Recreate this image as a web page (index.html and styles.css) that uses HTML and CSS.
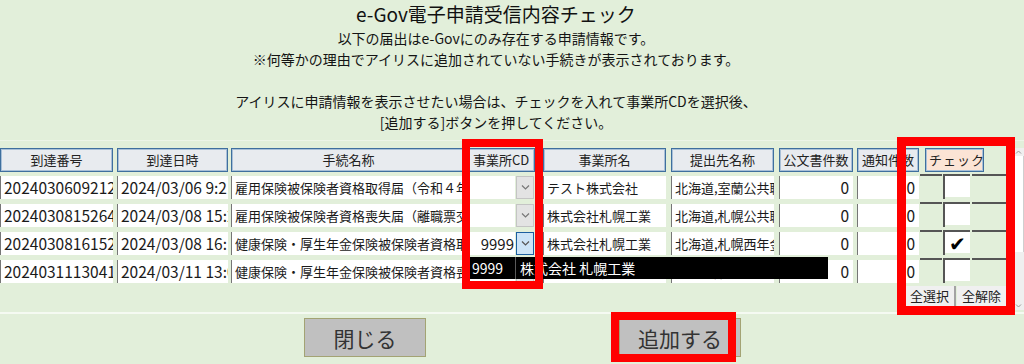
FILE: index.html
```html
<!DOCTYPE html>
<html lang="ja">
<head>
  <meta charset="UTF-8">
  <meta name="viewport" content="width=device-width, initial-scale=1.0">
  <title>e-Gov電子申請受信内容チェック</title>
  <link rel="stylesheet" href="styles.css">
</head>
<body>
  <div class="top">
    <h1>e-Gov電子申請受信内容チェック</h1>
    <p class="intro">以下の届出はe-Govにのみ存在する申請情報です。<br>※何等かの理由でアイリスに追加されていない手続きが表示されております。</p>
    <p class="intro gap">アイリスに申請情報を表示させたい場合は、チェックを入れて事業所CDを選択後、<br>[追加する]ボタンを押してください。</p>
  </div>

  <div class="table-area">
    <div class="grid">
      <!-- header -->
      <div class="row head">
        <div class="th c-no">到達番号</div>
        <div class="th c-date">到達日時</div>
        <div class="th c-proc">手続名称</div>
        <div class="th c-cd">事業所CD</div>
        <div class="th c-name">事業所名</div>
        <div class="th c-dest">提出先名称</div>
        <div class="th c-doc">公文書件数</div>
        <div class="th c-note">通知件数</div>
        <div class="th c-check">チェック</div>
      </div>

      <div class="row">
        <div class="cell num c-no">202403060921270</div>
        <div class="cell num c-date">2024/03/06 9:21</div>
        <div class="cell c-proc">雇用保険被保険者資格取得届（令和４年）</div>
        <div class="cd c-cd">
          <span class="cd-value"></span>
          <span class="cd-btn"><svg width="9" height="5" viewBox="0 0 9 5"><polyline points="1,0.5 4.5,4 8,0.5" fill="none" stroke="#777" stroke-width="1.2"/></svg></span>
        </div>
        <div class="cell c-name">テスト株式会社</div>
        <div class="cell c-dest">北海道,室蘭公共職業安定所</div>
        <div class="cell num right c-doc">0</div>
        <div class="cell num right c-note">0</div>
        <div class="chk"><span class="chk-gap"></span><span class="chk-box"><span class="tick"></span></span><span class="chk-rest"></span></div>
      </div>

      <div class="row">
        <div class="cell num c-no">202403081526430</div>
        <div class="cell num c-date">2024/03/08 15:26</div>
        <div class="cell c-proc">雇用保険被保険者資格喪失届（離職票交付）</div>
        <div class="cd c-cd">
          <span class="cd-value"></span>
          <span class="cd-btn"><svg width="9" height="5" viewBox="0 0 9 5"><polyline points="1,0.5 4.5,4 8,0.5" fill="none" stroke="#777" stroke-width="1.2"/></svg></span>
        </div>
        <div class="cell c-name">株式会社札幌工業</div>
        <div class="cell c-dest">北海道,札幌公共職業安定所</div>
        <div class="cell num right c-doc">0</div>
        <div class="cell num right c-note">0</div>
        <div class="chk"><span class="chk-gap"></span><span class="chk-box"><span class="tick"></span></span><span class="chk-rest"></span></div>
      </div>

      <div class="row">
        <div class="cell num c-no">202403081615220</div>
        <div class="cell num c-date">2024/03/08 16:15</div>
        <div class="cell c-proc">健康保険・厚生年金保険被保険者資格取得届</div>
        <div class="cd c-cd open">
          <span class="cd-value">9999</span>
          <span class="cd-btn focus"><svg width="9" height="5" viewBox="0 0 9 5"><polyline points="1,0.5 4.5,4 8,0.5" fill="none" stroke="#555" stroke-width="1.2"/></svg></span>
          <div class="dropdown">
            <span class="dd-code">9999</span>
            <span class="dd-name">株式会社 札幌工業</span>
          </div>
        </div>
        <div class="cell c-name">株式会社札幌工業</div>
        <div class="cell c-dest">北海道,札幌西年金事務所</div>
        <div class="cell num right c-doc">0</div>
        <div class="cell num right c-note">0</div>
        <div class="chk"><span class="chk-gap"></span><span class="chk-box"><span class="tick">✔</span></span><span class="chk-rest"></span></div>
      </div>

      <div class="row">
        <div class="cell num c-no">202403111304160</div>
        <div class="cell num c-date">2024/03/11 13:04</div>
        <div class="cell c-proc">健康保険・厚生年金保険被保険者資格喪失届</div>
        <div class="cd c-cd">
          <span class="cd-value"></span>
          <span class="cd-btn"></span>
        </div>
        <div class="cell c-name">株式会社札幌工業</div>
        <div class="cell c-dest">北海道,札幌西年金事務所</div>
        <div class="cell num right c-doc">0</div>
        <div class="cell num right c-note">0</div>
        <div class="chk"><span class="chk-gap"></span><span class="chk-box"><span class="tick"></span></span><span class="chk-rest"></span></div>
      </div>

      <div class="bulk">
        <button class="bulk-btn sel">全選択</button>
        <button class="bulk-btn">全解除</button>
      </div>
    </div>

    <div class="scroll">
      <svg width="11" height="8" viewBox="0 0 11 8"><polyline points="3,5.5 5.5,3 8,5.5" fill="none" stroke="#999" stroke-width="1"/></svg>
      <span class="thumb"></span>
      <svg class="down" width="11" height="8" viewBox="0 0 11 8"><polyline points="3,2.5 5.5,5 8,2.5" fill="none" stroke="#999" stroke-width="1"/></svg>
    </div>
  </div>

  <div class="actions">
    <button class="big-btn">閉じる</button>
    <button class="big-btn">追加する</button>
  </div>

  <!-- red annotation frames -->
  <div class="mark mark-cd"></div>
  <div class="mark mark-check"></div>
  <div class="mark mark-add"></div>
</body>
</html>
```

FILE: styles.css
```css
/* Page */
body {
  margin: 0;
  width: 1024px;
  height: 364px;
  overflow: hidden;
  position: relative;
  background-color: #e2efda;
  font-family: "Noto Sans CJK JP", sans-serif;
  color: #1a1a1a;
}

/* Title and notes */
.top {
  height: 140px;
  padding-right: 32px;
  text-align: center;
}

h1 {
  margin: 0;
  font-size: 19px;
  font-weight: normal;
  line-height: 28px;
  color: #111;
}

.intro {
  margin: 0;
  font-size: 14px;
  line-height: 21px;
  color: #141414;
}

.intro.gap {
  margin-top: 21px;
}

/* Table area */
.table-area {
  height: 172px;
  display: flex;
  box-sizing: border-box;
  border-top: 1px solid #edf5e8;
}

.grid {
  width: 1013px;
  padding-top: 7px;
}

.row {
  display: flex;
  height: 23px;
  margin-bottom: 5px;
}

.row.head {
  height: 24px;
  margin-bottom: 4px;
}

/* column widths */
.c-no   { width: 113px; margin-right: 4px; }
.c-date { width: 111px; margin-right: 3px; }
.c-proc { width: 235px; margin-right: 1px; }
.c-cd   { width: 68px;  margin-right: 8px; }
.c-name { width: 123px; margin-right: 5px; }
.c-dest { width: 103px; margin-right: 5px; }
.c-doc  { width: 74px;  margin-right: 4px; }
.c-note { width: 62px; }
.c-check { width: 59px; margin-left: 6px; }

.th {
  box-sizing: border-box;
  background-color: #e8ebef;
  border: 1px solid #3f6f9e;
  box-shadow: inset 0 0 0 1px #a9c0d8;
  font-size: 13px;
  line-height: 22px;
  text-align: center;
  color: #222;
  white-space: nowrap;
  overflow: hidden;
}

.th.c-check {
  background-color: #fbe4d5;
  text-align: left;
  padding-left: 3px;
  letter-spacing: 1px;
}

.cell {
  box-sizing: border-box;
  background-color: #fff;
  border-left: 1px solid #767676;
  padding: 0 3px;
  font-size: 13px;
  line-height: 23px;
  white-space: nowrap;
  overflow: hidden;
}

.cell.num {
  font-size: 15.5px;
}

.cell.right {
  text-align: right;
  padding-right: 4px;
}

/* combo box */
.cd {
  display: flex;
  position: relative;
}

.cd-value {
  flex: 1;
  background-color: #fff;
  border-left: 1px solid #767676;
  text-align: right;
  font-size: 15px;
  line-height: 23px;
  padding-right: 1px;
}

.cd-btn {
  width: 18px;
  margin: 0 1px;
  box-sizing: border-box;
  background-color: #e3e3e3;
  border: 1px solid #c4c4c4;
  display: flex;
  align-items: center;
  justify-content: center;
}

.cd-btn.focus {
  background-color: #cce4f7;
  border: 1px solid #1c5fa0;
}

.dropdown {
  position: absolute;
  top: 25px;
  left: -1px;
  width: 362px;
  height: 22px;
  background-color: #000;
  color: #fff;
  display: flex;
  font-size: 14px;
  line-height: 22px;
  z-index: 2;
}

.dd-code {
  width: 43px;
  padding-left: 6px;
  border-right: 1px solid #5a5a5a;
}

.dd-name {
  padding-left: 4px;
}

/* check column */
.chk {
  display: flex;
  height: 25px;
  margin-top: -2px;
  margin-left: 1px;
}

.chk-gap {
  width: 22px;
  border-top: 2px solid #555;
}

.chk-box {
  width: 25px;
  margin-left: 1px;
  border-top: 2px solid #555;
  border-left: 2px solid #555;
}

.tick {
  display: block;
  height: 21px;
  background-color: #fff;
  font-family: "DejaVu Sans", sans-serif;
  font-size: 20px;
  line-height: 25px;
  text-align: center;
  color: #000;
  overflow: hidden;
}

.chk-rest {
  width: 34px;
  margin-left: 2px;
  border-top: 2px solid #555;
}

/* select all / clear */
.bulk {
  display: flex;
  justify-content: flex-end;
  margin-top: -2px;
  margin-right: 7px;
}

.bulk-btn {
  height: 20px;
  padding: 0 5px;
  border: none;
  background-color: #f0f0f0;
  font-family: inherit;
  font-size: 13px;
  line-height: 20px;
  color: #222;
}

.bulk-btn.sel {
  border-right: 2px solid #a3a3a3;
  margin-right: 1px;
}

/* scrollbar */
.scroll {
  width: 11px;
  margin: 7px 0 2px;
  background-color: #efefef;
  display: flex;
  flex-direction: column;
}

.thumb {
  height: 96px;
  background-color: #fff;
  border-right: 1px solid #cfcfcf;
}

.scroll .down {
  margin-top: auto;
}

/* bottom buttons */
.actions {
  border-top: 2px solid #f5faf2;
  display: flex;
  padding: 4px 0 0 304px;
  gap: 193px;
}

.big-btn {
  width: 122px;
  height: 39px;
  background-color: #c0c0c0;
  border: 1px solid #a3a374;
  font-family: inherit;
  font-size: 21px;
  color: #333;
  padding: 0;
}

/* red annotation frames */
.mark {
  position: absolute;
  box-sizing: border-box;
  border: 8px solid #ff0000;
  z-index: 3;
}

.mark-cd {
  left: 462px;
  top: 139px;
  width: 81px;
  height: 150px;
}

.mark-check {
  left: 897px;
  top: 137px;
  width: 118px;
  height: 178px;
  border-width: 9px;
}

.mark-add {
  left: 611px;
  top: 312px;
  width: 125px;
  height: 50px;
}
```
